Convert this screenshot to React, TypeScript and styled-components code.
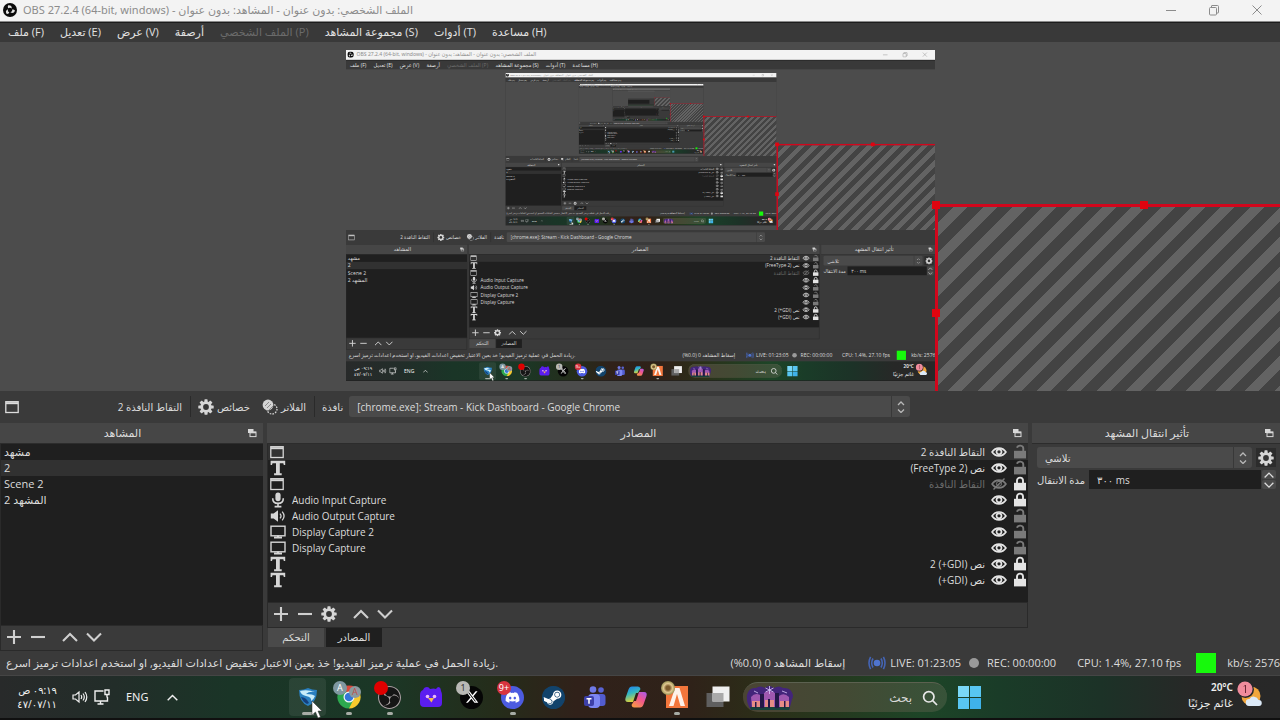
import React, { useId } from "react";
import styled, { createGlobalStyle, css } from "styled-components";
import { SiObsstudio } from "react-icons/si";
import { FaDiscord, FaSteam, FaXTwitter } from "react-icons/fa6";

const GlobalStyle = createGlobalStyle`
  *, *::before, *::after { box-sizing: border-box; }
  body { margin: 0; background: #3a3a3a; }
  button, input, select { font: inherit; color: inherit; }
`;

const uiFont = `"Open Sans", "DejaVu Sans", sans-serif`;
const winFont = `"Noto Sans", "DejaVu Sans", sans-serif`;

const SCREEN_W = 1280;
const SCREEN_H = 720;
const CANVAS_SCALE = 0.4605;
const MIRROR_DEPTH = 4;

/* ---------- shell ---------- */

const mirrored = css`
  width: ${SCREEN_W}px;
  height: ${SCREEN_H}px;
  transform: scale(${CANVAS_SCALE});
  transform-origin: 0 0;
`;

const Shell = styled.div<{ $mirror: boolean }>`
  display: flex;
  flex-direction: column;
  background: #3a3a3a;
  color: #dcdcdc;
  font-family: ${uiFont};
  font-size: 11px;
  line-height: 16px;
  overflow: hidden;
  min-height: 100vh;
  ${(p) => p.$mirror && mirrored}
`;

const TitleBar = styled.header`
  display: flex;
  align-items: center;
  height: 22px;
  padding: 0 16px 1px 3px;
  gap: 6px;
  background: #f3f3f3;
  color: #8c8c8c;
  border-bottom: 1px solid #8a8a8a;
  font-family: ${winFont};
  white-space: nowrap;
`;

const TitleText = styled.h1`
  margin: 0;
  flex: 1;
  font-size: 11px;
  font-weight: 400;
`;

const WindowButtons = styled.div`
  display: flex;
  gap: 29px;
`;

const BareButton = styled.button`
  display: flex;
  align-items: center;
  justify-content: center;
  padding: 0;
  border: 0;
  background: none;
`;

const MenuBar = styled.nav`
  display: flex;
  align-items: center;
  height: 20px;
  padding: 0 8px 2px;
  gap: 16px;
  background: #393939;
  border-top: 1px solid #1c1c1c;
  white-space: nowrap;
`;

const MenuItem = styled.button`
  padding: 0;
  border: 0;
  background: none;
  color: #e2e2e2;
  line-height: 16px;
  &:disabled {
    color: #6b6b6b;
  }
`;

/* ---------- preview ---------- */

const Preview = styled.main`
  position: relative;
  flex: 1 0 349px;
  background: #4c4c4c;
  overflow: hidden;
`;

const Canvas = styled.div`
  position: absolute;
  left: 346px;
  top: 8px;
  width: 589px;
  height: 331px;
  overflow: hidden;
  background: #4c4c4c;
`;

const Selection = styled.div`
  position: absolute;
  left: 935px;
  top: 162px;
  width: 421px;
  height: 222px;
  border: 3px solid #d2061c;
  background: repeating-linear-gradient(135deg, #434343 0 11px, #636363 11px 21px);
`;

const Handle = styled.i<{ $x: string; $y: string }>`
  position: absolute;
  left: ${(p) => p.$x};
  top: ${(p) => p.$y};
  width: 8px;
  height: 8px;
  margin: -6px;
  background: #e0040f;
`;

/* smallest mirror level: only its blocks can be told apart */

const Thumb = styled.div`
  display: flex;
  flex-direction: column;
  ${mirrored}
`;

const ThumbTitle = styled.div`
  height: 22px;
  background: #f3f3f3;
`;

const ThumbPreview = styled.div`
  flex: 1;
  background: #4c4c4c;
`;

const ThumbDocks = styled.div`
  height: 285px;
  border: solid #3a3a3a;
  border-width: 52px 250px 50px 0;
  background: #1f1f1f;
`;

const ThumbTaskbar = styled.div`
  height: 44px;
  background: #1d3424;
`;

/* ---------- source toolbar ---------- */

const ContextBar = styled.section`
  display: flex;
  align-items: center;
  height: 31px;
  padding-left: 5px;
  background: #3a3a3a;
  font-size: 10px;
  white-space: nowrap;
`;

const ContextName = styled.div`
  display: flex;
  align-items: center;
  justify-content: space-between;
  width: 177px;
`;

const Divider = styled.span`
  width: 1px;
  height: 21px;
  margin: 0 7px 0 8px;
  background: #2a2a2a;
`;

const ContextAction = styled.button`
  display: flex;
  align-items: center;
  gap: 3px;
  padding: 0;
  border: 0;
  background: none;
  & + & {
    margin-left: 12px;
  }
`;

const FieldLabel = styled.label`
  white-space: nowrap;
  font-size: 10px;
`;

const SelectWrap = styled.span<{ $width?: string }>`
  position: relative;
  display: flex;
  height: 21px;
  width: ${(p) => p.$width ?? "auto"};
  flex: ${(p) => (p.$width ? "none" : "1")};
  margin-left: ${(p) => (p.$width ? "6px" : "0")};
`;

const Select = styled.select`
  appearance: none;
  width: 100%;
  height: 100%;
  padding: 0 24px 0 8px;
  border: 0;
  border-radius: 3px;
  background: #4a4a4a;
  font-size: 10px;
`;

const SelectArrows = styled.span`
  position: absolute;
  right: 0;
  top: 0;
  bottom: 0;
  width: 19px;
  display: flex;
  align-items: center;
  justify-content: center;
  border-left: 1px solid #383838;
  pointer-events: none;
`;

/* ---------- docks ---------- */

const Docks = styled.div`
  display: grid;
  grid-template-columns: 263px 1fr 248px;
  column-gap: 4px;
  height: 229px;
  padding-top: 1px;
  background: #3a3a3a;
`;

const Dock = styled.section`
  display: flex;
  flex-direction: column;
  min-width: 0;
`;

const DockHeader = styled.header`
  display: grid;
  grid-template-columns: 1fr 14px;
  align-items: center;
  height: 21px;
  padding-right: 4px;
  background: #464646;
  border-bottom: 1px solid #2c2c2c;
`;

const DockTitle = styled.h2`
  margin: 0;
  text-align: center;
  font-size: 11px;
  font-weight: 400;
`;

const List = styled.ul`
  flex: 1;
  margin: 0;
  padding: 0;
  list-style: none;
  background: #1f1f1f;
  border-left: 1px solid #2a2a2a;
`;

const SceneItem = styled.li<{ $active: boolean }>`
  height: 16px;
  padding-left: 3px;
  background: ${(p) => (p.$active ? "#313131" : "transparent")};
`;

const SourceItem = styled.li<{ $active: boolean; $muted: boolean }>`
  display: flex;
  align-items: center;
  height: 16px;
  padding: 0 1px 0 2px;
  font-size: 10px;
  background: ${(p) => (p.$active ? "#313131" : "transparent")};
  color: ${(p) => (p.$muted ? "#6c6c6c" : "#dcdcdc")};
`;

const SourceIcon = styled.span`
  display: flex;
  width: 16px;
  color: #d6d6d6;
`;

const SourceName = styled.span`
  flex: 1;
  padding: 0 6px;
  text-align: start;
  white-space: nowrap;
`;

const RowToggle = styled.button<{ $dim: boolean }>`
  display: flex;
  padding: 0;
  border: 0;
  background: none;
  color: ${(p) => (p.$dim ? "#7a7a7a" : "#e4e4e4")};
  & + & {
    margin-left: 6px;
  }
`;

const DockToolbar = styled.div`
  display: flex;
  align-items: center;
  height: 26px;
  padding: 0 0 2px 5px;
  gap: 8px;
  border: 1px solid #2a2a2a;
  color: #cfcfcf;
`;

const ToolGap = styled.span`
  width: 0;
`;

const Tabs = styled.div`
  display: flex;
  gap: 2px;
  height: 23px;
  padding-left: 1px;
`;

const Tab = styled.button<{ $active: boolean }>`
  width: 56px;
  height: 19px;
  padding: 0 0 2px;
  border: 0;
  font-size: 10px;
  background: ${(p) => (p.$active ? "#1f1f1f" : "#4a4a4a")};
`;

const TransitionBody = styled.div`
  display: flex;
  flex-direction: column;
  gap: 3px;
  padding: 4px 4px 0 5px;
`;

const FieldRow = styled.div`
  display: flex;
  align-items: center;
  gap: 4px;
  height: 19px;
`;

const GearButton = styled(BareButton)`
  width: 20px;
  height: 19px;
  background: #2c2c2c;
`;

const DurationInput = styled.input`
  flex: 1;
  min-width: 0;
  height: 19px;
  padding: 0 8px;
  border: 0;
  background: #1f1f1f;
  font-size: 10px;
`;

const Spinner = styled.div`
  display: flex;
  flex-direction: column;
  gap: 1px;
  width: 14px;
  margin-left: -3px;
`;

const SpinButton = styled(BareButton)`
  height: 9px;
  background: #4a4a4a;
  border-radius: 2px;
`;

/* ---------- status ---------- */

const StatusBar = styled.footer`
  display: flex;
  align-items: center;
  height: 25px;
  padding-left: 6px;
  white-space: nowrap;
  border-bottom: 1px solid #454545;
`;

const StatusText = styled.span<{ $before?: number }>`
  margin-left: ${(p) => p.$before ?? 0}px;
  display: flex;
  align-items: center;
`;

const StatusMessage = styled.span`
  flex: 1;
`;

const RecDot = styled.span`
  width: 10px;
  height: 10px;
  margin-left: 8px;
  border-radius: 50%;
  background: #9a9a9a;
`;

const Health = styled.span`
  width: 20px;
  height: 20px;
  margin-left: 15px;
  background: #17f90c;
`;

/* ---------- taskbar ---------- */

const Taskbar = styled.footer`
  position: relative;
  display: grid;
  grid-template-columns: 1fr auto 1fr;
  align-items: center;
  height: 44px;
  font-family: ${winFont};
  color: #f0f0f0;
  border-bottom: 2px solid #101010;
  background: linear-gradient(
    90deg,
    #282a2a 0%,
    #222d29 9%,
    #1a3527 18%,
    #1b3726 30%,
    #252c1a 39%,
    #30211a 45%,
    #2f2219 54%,
    #2b2f18 60%,
    #1d4527 72%,
    #1a3c28 78%,
    #1c3227 86%,
    #272827 93%,
    #282828 100%
  );
`;

const Tray = styled.div`
  display: flex;
  align-items: center;
  padding-left: 17px;
`;

const Clock = styled.time`
  display: flex;
  flex-direction: column;
  align-items: flex-end;
  width: 40px;
  font-size: 10px;
  line-height: 14px;
  white-space: nowrap;
`;

const TrayItem = styled(BareButton)<{ $before: number }>`
  margin-left: ${(p) => p.$before}px;
  font-size: 11px;
`;

const Apps = styled.div`
  display: flex;
  align-items: center;
  height: 100%;
`;

const AppButton = styled.button<{ $active?: boolean }>`
  position: relative;
  display: flex;
  align-items: center;
  justify-content: center;
  width: 37px;
  height: 38px;
  margin: 0 2px;
  padding: 0;
  border: 0;
  border-radius: 4px;
  background: ${(p) => (p.$active ? "rgba(255,255,255,0.07)" : "none")};
`;

const Running = styled.i<{ $wide?: boolean }>`
  position: absolute;
  bottom: 1px;
  width: ${(p) => (p.$wide ? "12px" : "6px")};
  height: 3px;
  border-radius: 2px;
  background: #a7aca6;
`;

const Badge = styled.span<{ $bg: string; $fg?: string }>`
  position: absolute;
  left: 3px;
  top: 3px;
  width: 14px;
  height: 14px;
  border-radius: 50%;
  background: ${(p) => p.$bg};
  color: ${(p) => p.$fg ?? "#ffffff"};
  font-size: 9px;
  line-height: 14px;
  text-align: center;
`;

const BadgeRight = styled(Badge)`
  left: 19px;
  top: 8px;
  width: 12px;
  height: 12px;
  line-height: 12px;
`;

const Disc = styled.span<{ $bg: string }>`
  display: flex;
  align-items: center;
  justify-content: center;
  width: 23px;
  height: 23px;
  border-radius: 50%;
  background: ${(p) => p.$bg};
  color: #ffffff;
`;

const Search = styled.button`
  display: flex;
  align-items: center;
  width: 204px;
  height: 30px;
  margin-left: 5px;
  padding: 0 9px 0 3px;
  border: 0;
  border-top: 1px solid #5c6150;
  border-radius: 15px;
  background: linear-gradient(90deg, #4a4434, #434a34 50%, #375339);
  font-size: 12px;
`;

const SearchText = styled.span`
  flex: 1;
  padding-right: 10px;
  text-align: right;
  color: #d8d8d8;
`;

const StartButton = styled(BareButton)`
  margin-left: 11px;
  margin-right: 12px;
`;

const Weather = styled.div`
  position: relative;
  display: flex;
  align-items: center;
  justify-content: flex-end;
  gap: 4px;
  padding: 0 16px 4px 0;
`;

const WeatherText = styled.span`
  display: flex;
  flex-direction: column;
  align-items: flex-end;
  font-size: 11px;
  line-height: 15px;
`;

const Degrees = styled.strong`
  font-size: 10px;
  font-weight: 600;
`;

const Pointer = styled.svg`
  position: absolute;
  left: 22px;
  top: 22px;
`;

/* ---------- icons ---------- */

const ObsLogo = () => (
  <svg width="14" height="14" viewBox="0 0 14 14">
    <circle cx="7" cy="7" r="7" fill="#0b0b0b" />
    {[0, 120, 240].map((a) => (
      <path
        key={a}
        d="M5.200 2.200q3.800-.300 3.600 3.400-1.600-1.600-3.600-.400-.900-1.500 0-3z"
        fill="#e4e4e4"
        transform={`rotate(${a} 7 7)`}
      />
    ))}
  </svg>
);

const Gear = ({ size = 16 }: { size?: number }) => (
  <svg width={size} height={size} viewBox="0 0 16 16" fill="#d6d6d6">
    {[0, 45, 90, 135].map((a) => (
      <rect key={a} x="6.400" y="0.300" width="3.200" height="15.400" rx="0.600" transform={`rotate(${a} 8 8)`} />
    ))}
    <circle cx="8" cy="8" r="5.700" />
    <circle cx="8" cy="8" r="2.900" fill="#353535" />
  </svg>
);

const WindowIcon = () => (
  <svg width="14" height="14" viewBox="0 0 14 14" fill="none" stroke="currentColor">
    <rect x="0.800" y="1.700" width="12.400" height="10.800" strokeWidth="1.300" />
    <path d="M1 3.200h12" strokeWidth="2" />
  </svg>
);

const TextIcon = () => (
  <svg width="16" height="16" viewBox="0 0 16 16" fill="currentColor">
    <path d="M.6.8h14.600v4.200h-1.400l-.500-1.700H9.800v10h1.900v1.900H4.100v-1.900H6v-10H2.500L2 5H.600z" />
  </svg>
);

const MicIcon = () => (
  <svg width="16" height="16" viewBox="0 0 16 16" fill="none" stroke="currentColor">
    <rect x="5.400" y="0.600" width="5.200" height="8.600" rx="2.600" fill="currentColor" stroke="none" />
    <path d="M2.700 6.200c0 3.600 2.300 5.200 5.300 5.200s5.300-1.600 5.300-5.200M8 11.400v3M4.600 14.600h6.800" strokeWidth="1.600" />
  </svg>
);

const SpeakerIcon = () => (
  <svg width="16" height="16" viewBox="0 0 16 16" fill="none" stroke="currentColor">
    <path d="M.8 5.400h2.800L8 2.200v11.600l-4.400-3.200H.800z" fill="currentColor" stroke="none" />
    <path d="M10 5.600c1.200 1.400 1.200 3.400 0 4.800M12.200 3.600c2.200 2.600 2.200 6.200 0 8.800" strokeWidth="1.300" />
  </svg>
);

const MonitorIcon = () => (
  <svg width="16" height="16" viewBox="0 0 16 16" fill="none" stroke="currentColor">
    <rect x="1" y="2.200" width="14" height="9.600" strokeWidth="1.400" />
    <path d="M4 13.600h8M8 11.400v2.400" strokeWidth="2" />
  </svg>
);

const EyeIcon = ({ off }: { off?: boolean }) => (
  <svg width="16" height="16" viewBox="0 0 16 16" fill="none" stroke="currentColor">
    <path d="M1.100 8C4.400 2.700 11.600 2.700 14.900 8 11.600 13.100 4.400 13.100 1.100 8z" strokeWidth="1.700" />
    <circle cx="8" cy="7.800" r="2.500" strokeWidth={off ? 1 : 1.7} />
    {off && <path d="M2.500 13.500 13.500 2.500" strokeWidth="1.400" />}
  </svg>
);

const LockIcon = ({ locked }: { locked: boolean }) => (
  <svg width="14" height="16" viewBox="0 0 14 16" fill="none" stroke="currentColor">
    <rect x="1" y="6.800" width="12" height="7.600" fill="currentColor" stroke="none" />
    <path d={locked ? "M4 7V4.600C4 .600 10 .600 10 4.600V7" : "M4 3.800C5 .600 10.300 1 10.300 4.600V7"} strokeWidth="1.900" />
  </svg>
);

const PopoutIcon = () => (
  <svg width="10" height="10" viewBox="0 0 10 10">
    <rect x="1" y="1" width="5.500" height="4" fill="#d8d8d8" />
    <rect x="3" y="4" width="6" height="4.600" fill="#464646" stroke="#d8d8d8" />
    <path d="M3 4.500h6" stroke="#d8d8d8" strokeWidth="1.600" />
  </svg>
);

const Stroke = ({ d, size = 16 }: { d: string; size?: number }) => (
  <svg width={size} height={size} viewBox="0 0 16 16" fill="none" stroke="currentColor" strokeWidth="2.100">
    <path d={d} />
  </svg>
);

const PLUS = "M8 1v14M1 8h14";
const MINUS = "M1 8h14";
const UP = "M1 12l7-7 7 7";
const DOWN = "M1 4.500l7 7 7-7";

const UpDown = () => (
  <svg width="8" height="12" viewBox="0 0 8 12" fill="none" stroke="#b8b8b8" strokeWidth="1.300">
    <path d="M1 4l3-3 3 3M1 8.500l3 3 3-3" />
  </svg>
);

const FilterIcon = () => (
  <svg width="16" height="16" viewBox="0 0 16 16">
    <circle cx="10" cy="10" r="5" fill="none" stroke="#d4d4d4" strokeWidth="1.300" strokeDasharray="1.600 1.200" />
    <circle cx="6" cy="6" r="5.400" fill="#d4d4d4" />
    <path d="M3 7l4-4M5 9l4-4M7 11l4-4" stroke="#777" strokeWidth="0.800" />
  </svg>
);

const ShieldIcon = () => (
  <svg width="22" height="22" viewBox="0 0 22 22">
    <path d="M2 4Q7 4 11 2q4 2 9 2 0 12-9 16Q2 16 2 4z" fill="#2a7fc0" />
    <path d="M3 5q7-2 15 1-6-1-9 2 7 0 9 2-1 3-4 5 1-4-5-5-5-1-6-5z" fill="#c9ecfa" />
    <path d="M4 11q5 0 8 6l-2 1q-4-2-6-7z" fill="#153f7c" />
  </svg>
);

const ChromeIcon = () => (
  <svg width="24" height="24" viewBox="0 0 24 24">
    <path d="M12 12 2 6.200A11.500 11.500 0 0 1 22 6.200z" fill="#d9483b" />
    <path d="M12 12V23.500A11.500 11.500 0 0 1 2 6.200z" fill="#2da84f" />
    <path d="M12 12 22 6.200A11.500 11.500 0 0 1 12 23.500z" fill="#f7c92c" />
    <path d="M7.500 14.500 2 6.200l10 .800zM16.500 14.500 12 23.500 10 17z" fill="#2da84f" />
    <path d="M12 6.600H22l-4 3z" fill="#d9483b" />
    <circle cx="12" cy="12" r="5.500" fill="#f4f7fb" />
    <circle cx="12" cy="12" r="4.300" fill="#3478d8" />
  </svg>
);

const BirdIcon = () => (
  <svg width="24" height="24" viewBox="0 0 24 24">
    <path d="M1 10q0-4 3-5 1-3 4-3 2 0 3 2 4-1 6 0 1-2 3-2 2 1 2 4 1 2 1 4v8q0 4-4 4H5q-4 0-4-4z" fill="#5b1df0" />
    <circle cx="8.500" cy="11.500" r="1.800" fill="#e9b9fa" />
    <circle cx="15.500" cy="11.500" r="1.800" fill="#e9b9fa" />
    <path d="M9 13h6l-2.500 4.500z" fill="#f6b94c" />
  </svg>
);

const TeamsIcon = () => (
  <svg width="24" height="24" viewBox="0 0 24 24">
    <circle cx="10" cy="4.500" r="3.300" fill="#6f79e6" />
    <circle cx="18" cy="5" r="2.800" fill="#5963d4" />
    <rect x="13" y="9" width="9.500" height="12" rx="3" fill="#525ccf" />
    <rect x="5" y="9" width="12" height="14" rx="4" fill="#7c86f2" />
    <rect x="1" y="11" width="10" height="10" rx="2" fill="#3c3fa8" />
    <path d="M3.500 13.800h5M6 13.800v5" stroke="#fff" strokeWidth="1.500" />
  </svg>
);

const CopilotIcon = () => (
  <svg width="24" height="24" viewBox="0 0 24 24">
    <defs>
      <linearGradient id="cp-left" x1="0" y1="0" x2="0.300" y2="1">
        <stop offset="0" stopColor="#1f7ff0" />
        <stop offset="0.500" stopColor="#35b8c0" />
        <stop offset="1" stopColor="#d9d13c" />
      </linearGradient>
      <linearGradient id="cp-right" x1="1" y1="0" x2="0.300" y2="1">
        <stop offset="0" stopColor="#a45cf0" />
        <stop offset="0.500" stopColor="#f0558f" />
        <stop offset="1" stopColor="#f7944a" />
      </linearGradient>
    </defs>
    <path d="M8 1.500h6q2 0 2.500 2.500L14 8h-2l-3 9H4q-3.500 0-2.500-4L4.500 4.500Q5.500 1.500 8 1.500z" fill="url(#cp-left)" />
    <path d="M16 22.500h-6q-2 0-2.500-2.500L10 16h2l3-9h5q3.500 0 2.500 4l-3 8.500q-1 3-3.500 3z" fill="url(#cp-right)" />
  </svg>
);

const FiveMIcon = () => (
  <svg width="24" height="24" viewBox="0 0 24 24">
    <rect x="1" y="1" width="22" height="22" fill="#f2763c" />
    <path d="M10 3h4.500l5.500 18h-4.500L12 9 8.500 21H4z" fill="#fdf1ea" />
    <path d="M12 12l2.500 9h-5z" fill="#f2763c" />
  </svg>
);

const TaskViewIcon = () => (
  <svg width="24" height="22" viewBox="0 0 24 22">
    <rect x="0.500" y="7" width="17" height="14" fill="#5f5f5f" />
    <rect x="6.500" y="0.500" width="17" height="15" fill="#efefef" />
    <rect x="6.500" y="7" width="11" height="8.500" fill="#a9a9a9" />
  </svg>
);

const SearchArt = () => (
  <svg width="48" height="26" viewBox="0 0 48 26">
    <path d="M1 10Q3 2 10 3q4 -3 9 0 4-4 9 0 5-3 9 0 8-1 10 7 0 3-1 4-1 5-3 11H5Q0 18 1 10z" fill="#43257a" />
    <path d="M5 12q4-5 9-2v14H6zM18 8q5-4 11 0v16H18zM33 11q5-4 10 1v12H33z" fill="#9f58b0" />
    <path d="M6 16h8v8H6zM19 15h9v9h-9zM34 16h9v8h-9z" fill="#e58c86" />
    <path d="M4 22h40l-1 3H5z" fill="#17423a" />
    <path d="M14 9h4v14h-4zM29 8h4v15h-4zM9 17h1.500v6H9zM22 14h2v9h-2zM38 16h1.500v7H38z" fill="#241848" />
    <path d="M23.500 1v8M19.500 3l8 4M27.500 3l-8 4M8 6l4 2M36 6l5 2" stroke="#d9c6fa" strokeWidth="0.800" />
  </svg>
);

const MagnifierIcon = () => (
  <svg width="16" height="16" viewBox="0 0 16 16" fill="none" stroke="#e8e8e8" strokeWidth="1.700">
    <circle cx="6.800" cy="6.800" r="5.200" />
    <path d="M10.700 10.700 15 15" />
  </svg>
);

const StartIcon = () => (
  <svg width="23" height="23" viewBox="0 0 23 23" fill="#58c6f2">
    <path d="M0 0h11v11H0z" fill="#7ad8f7" />
    <path d="M12 0h11v11H12zM0 12h11v11H0z" />
    <path d="M12 12h11v11H12z" fill="#3fb2ea" />
  </svg>
);

const WeatherIcon = () => (
  <svg width="27" height="28" viewBox="0 0 27 28">
    <circle cx="14" cy="15" r="9.500" fill="#f2a63c" />
    <circle cx="8.500" cy="8.500" r="8.500" fill="#26282a" />
    <circle cx="8" cy="8" r="7.600" fill="#f08c9c" />
    <path d="M7 5.500 8.500 4v8" stroke="#6d2735" fill="none" />
    <path d="M12 25a3.500 3.500 0 0 1 .500-7 5 5 0 0 1 9 1 3 3 0 0 1 .500 6z" fill="#dce9f7" />
  </svg>
);

const LiveIcon = () => (
  <svg width="18" height="16" viewBox="0 0 18 16" fill="none" stroke="#4464b4" strokeWidth="1.600">
    <circle cx="9" cy="8" r="3.300" fill="#4f74cf" stroke="none" />
    <path d="M5 3.500q-2.600 4.500 0 9M13 3.500q2.600 4.500 0 9M2.600 1.800q-3.200 6.200 0 12.400M15.400 1.800q3.200 6.200 0 12.400" />
  </svg>
);

const TraySpeaker = () => (
  <svg width="16" height="14" viewBox="0 0 16 14" fill="none" stroke="currentColor" strokeWidth="1.200">
    <path d="M1 5h2.500L7 2v10L3.500 9H1zM9 5q1.400 2 0 4M11 3.500q2.600 3.500 0 7M13 2q3.600 5 0 10" />
  </svg>
);

const TrayMonitor = () => (
  <svg width="16" height="16" viewBox="0 0 16 16" fill="none" stroke="currentColor" strokeWidth="1.400">
    <path d="M9.500 2H1v10h12.500V8M3.500 15h6M6.500 12v3M11 1h4v4.500h-4zM13 5.500v3" />
  </svg>
);

/* ---------- data ---------- */

const menus = [
  { label: "ملف (F)" },
  { label: "تعديل (E)" },
  { label: "عرض (V)" },
  { label: "أرصفة" },
  { label: "الملف الشخصي (P)", disabled: true },
  { label: "مجموعة المشاهد (S)" },
  { label: "أدوات (T)" },
  { label: "مساعدة (H)" },
];

const scenes = ["مشهد", "2", "Scene 2", "المشهد 2"];

type Source = { icon: React.FC; name: string; hidden?: boolean; locked?: boolean };

const sources: Source[] = [
  { icon: WindowIcon, name: "التقاط النافذة 2" },
  { icon: TextIcon, name: "نص (FreeType 2)" },
  { icon: WindowIcon, name: "التقاط النافذة", hidden: true, locked: true },
  { icon: MicIcon, name: "Audio Input Capture", locked: true },
  { icon: SpeakerIcon, name: "Audio Output Capture" },
  { icon: MonitorIcon, name: "Display Capture 2" },
  { icon: MonitorIcon, name: "Display Capture" },
  { icon: TextIcon, name: "نص (GDI+) 2", locked: true },
  { icon: TextIcon, name: "نص (GDI+)", locked: true },
];

/* ---------- parts ---------- */

function DockHead({ title }: { title: string }) {
  return (
    <DockHeader>
      <DockTitle>{title}</DockTitle>
      <BareButton aria-label="فصل اللوحة">
        <PopoutIcon />
      </BareButton>
    </DockHeader>
  );
}

function ListTools({ gear }: { gear?: boolean }) {
  return (
    <DockToolbar>
      <BareButton aria-label="إضافة"><Stroke d={PLUS} /></BareButton>
      <BareButton aria-label="إزالة"><Stroke d={MINUS} /></BareButton>
      {gear && <BareButton aria-label="خصائص"><Gear /></BareButton>}
      <ToolGap />
      <BareButton aria-label="أعلى"><Stroke d={UP} /></BareButton>
      <BareButton aria-label="أسفل"><Stroke d={DOWN} /></BareButton>
    </DockToolbar>
  );
}

function MirrorThumb() {
  return (
    <Thumb>
      <ThumbTitle />
      <ThumbPreview />
      <ThumbDocks />
      <ThumbTaskbar />
    </Thumb>
  );
}

function ObsScreen({ depth }: { depth: number }) {
  const id = useId();
  return (
    <Shell $mirror={depth > 0}>
      <TitleBar>
        <ObsLogo />
        <TitleText>OBS 27.2.4 (64-bit, windows) - الملف الشخصي: بدون عنوان - المشاهد: بدون عنوان</TitleText>
        <WindowButtons>
          <BareButton aria-label="تصغير">
            <svg width="14" height="14" viewBox="0 0 14 14" stroke="currentColor"><path d="M2 7.500h10" /></svg>
          </BareButton>
          <BareButton aria-label="استعادة">
            <svg width="14" height="14" viewBox="0 0 14 14" fill="none" stroke="currentColor">
              <rect x="2.500" y="4.500" width="7" height="7.500" rx="1" />
              <path d="M4.500 4.500V3q0-.500.500-.500h5.500q1 0 1 1v6q0 .500-.500.500h-1.500" />
            </svg>
          </BareButton>
          <BareButton aria-label="إغلاق">
            <svg width="14" height="14" viewBox="0 0 14 14" stroke="currentColor"><path d="M2.500 2.500l9 9M11.500 2.500l-9 9" /></svg>
          </BareButton>
        </WindowButtons>
      </TitleBar>

      <MenuBar>
        {menus.map((m) => (
          <MenuItem key={m.label} disabled={m.disabled}>{m.label}</MenuItem>
        ))}
      </MenuBar>

      <Preview>
        <Canvas inert>{depth < MIRROR_DEPTH ? <ObsScreen depth={depth + 1} /> : <MirrorThumb />}</Canvas>
        <Selection>
          <Handle $x="0px" $y="0px" />
          <Handle $x="50%" $y="0px" />
          <Handle $x="0px" $y="50%" />
        </Selection>
      </Preview>

      <ContextBar>
        <ContextName>
          <WindowIcon />
          <span dir="rtl">التقاط النافذة 2</span>
        </ContextName>
        <Divider />
        <ContextAction><Gear /><span>خصائص</span></ContextAction>
        <ContextAction><FilterIcon /><span>الفلاتر</span></ContextAction>
        <Divider />
        <FieldLabel htmlFor={`${id}-window`}>نافذة</FieldLabel>
        <SelectWrap $width="561px">
          <Select id={`${id}-window`}>
            <option>[chrome.exe]: Stream - Kick Dashboard - Google Chrome</option>
          </Select>
          <SelectArrows><UpDown /></SelectArrows>
        </SelectWrap>
      </ContextBar>

      <Docks>
        <Dock>
          <DockHead title="المشاهد" />
          <List>
            {scenes.map((s) => (
              <SceneItem key={s} $active={s === "2"}>{s}</SceneItem>
            ))}
          </List>
          <ListTools />
        </Dock>

        <Dock>
          <DockHead title="المصادر" />
          <List>
            {sources.map((s, i) => (
              <SourceItem key={s.name} $active={i === 0} $muted={!!s.hidden}>
                <SourceIcon><s.icon /></SourceIcon>
                <SourceName dir="auto">{s.name}</SourceName>
                <RowToggle aria-label="إظهار" $dim={!!s.hidden}><EyeIcon off={s.hidden} /></RowToggle>
                <RowToggle aria-label="قفل" $dim={!s.locked}><LockIcon locked={!!s.locked} /></RowToggle>
              </SourceItem>
            ))}
          </List>
          <ListTools gear />
          <Tabs>
            <Tab $active={false}>التحكم</Tab>
            <Tab $active>المصادر</Tab>
          </Tabs>
        </Dock>

        <Dock>
          <DockHead title="تأثير انتقال المشهد" />
          <TransitionBody>
            <FieldRow>
              <SelectWrap>
                <Select aria-label="تأثير انتقال المشهد">
                  <option>تلاشي</option>
                </Select>
                <SelectArrows><UpDown /></SelectArrows>
              </SelectWrap>
              <GearButton aria-label="خصائص الانتقال"><Gear /></GearButton>
            </FieldRow>
            <FieldRow>
              <FieldLabel htmlFor={`${id}-duration`}>مدة الانتقال</FieldLabel>
              <DurationInput id={`${id}-duration`} defaultValue="٣٠٠ ms" />
              <Spinner>
                <SpinButton aria-label="زيادة"><Stroke d={UP} size={10} /></SpinButton>
                <SpinButton aria-label="إنقاص"><Stroke d={DOWN} size={10} /></SpinButton>
              </Spinner>
            </FieldRow>
          </TransitionBody>
        </Dock>
      </Docks>

      <StatusBar>
        <StatusMessage>
          زيادة الحمل في عملية ترميز الفيديو! خذ بعين الاعتبار تخفيض اعدادات الفيديو, او استخدم اعدادات ترميز اسرع.
        </StatusMessage>
        <StatusText dir="rtl">إسقاط المشاهد 0 (0.0%)</StatusText>
        <StatusText $before={23}><LiveIcon /></StatusText>
        <StatusText $before={4}>LIVE: 01:23:05</StatusText>
        <RecDot />
        <StatusText $before={8}>REC: 00:00:00</StatusText>
        <StatusText $before={21}>CPU: 1.4%, 27.10 fps</StatusText>
        <Health />
        <StatusText $before={11}>kb/s: 2576</StatusText>
      </StatusBar>

      <Taskbar>
        <Tray>
          <Clock>
            <span dir="rtl">٠٩:١٩ ص</span>
            <span>٤٧/٠٧/١١</span>
          </Clock>
          <TrayItem $before={15} aria-label="الصوت"><TraySpeaker /></TrayItem>
          <TrayItem $before={6} aria-label="الشبكة"><TrayMonitor /></TrayItem>
          <TrayItem $before={16}>ENG</TrayItem>
          <TrayItem $before={19} aria-label="الأيقونات المخفية"><Stroke d={UP} size={11} /></TrayItem>
        </Tray>

        <Apps>
          <AppButton $active aria-label="Shield">
            <ShieldIcon />
            <Running $wide />
            <Pointer width="12" height="19" viewBox="0 0 12 19">
              <path d="M1 1v14l3.500-3 2.500 6 2.500-1-2.500-6H11z" fill="#fff" stroke="#333" strokeWidth="0.500" />
            </Pointer>
          </AppButton>
          <AppButton aria-label="Chrome">
            <ChromeIcon />
            <BadgeRight $bg="#8a9aa0" $fg="#c0504a">A</BadgeRight>
            <Badge $bg="#7f97a0">A</Badge>
            <Running />
          </AppButton>
          <AppButton aria-label="OBS">
            <Disc $bg="#151515"><SiObsstudio size={23} color="#a9a3a3" /></Disc>
            <Badge $bg="#e00000" />
            <Running />
          </AppButton>
          <AppButton aria-label="Bird"><BirdIcon /></AppButton>
          <AppButton aria-label="X">
            <Disc $bg="#050505"><FaXTwitter size={14} /></Disc>
            <Badge $bg="#b9b9b5" $fg="#333333">1</Badge>
          </AppButton>
          <AppButton aria-label="Discord">
            <Disc $bg="#4c5be0"><FaDiscord size={15} /></Disc>
            <Badge $bg="#d8343f">9+</Badge>
            <Running />
          </AppButton>
          <AppButton aria-label="Steam">
            <Disc $bg="radial-gradient(circle, #ffffff 60%, #12436b 62%)"><FaSteam size={23} color="#12436b" /></Disc>
          </AppButton>
          <AppButton aria-label="Teams"><TeamsIcon /></AppButton>
          <AppButton aria-label="Copilot"><CopilotIcon /></AppButton>
          <AppButton aria-label="FiveM">
            <FiveMIcon />
            <Badge $bg="radial-gradient(circle, #7c5a2c 20%, #e0c890 45%, #8c8a4c 75%)" />
            <Running />
          </AppButton>
          <AppButton aria-label="عرض المهام"><TaskViewIcon /></AppButton>
          <Search>
            <SearchArt />
            <SearchText>بحث</SearchText>
            <MagnifierIcon />
          </Search>
          <StartButton aria-label="ابدأ"><StartIcon /></StartButton>
        </Apps>

        <Weather>
          <WeatherText>
            <Degrees>20°C</Degrees>
            <span dir="rtl">غائم جزئيًا</span>
          </WeatherText>
          <WeatherIcon />
        </Weather>
      </Taskbar>
    </Shell>
  );
}

export default function App() {
  return (
    <>
      <GlobalStyle />
      <ObsScreen depth={0} />
    </>
  );
}
